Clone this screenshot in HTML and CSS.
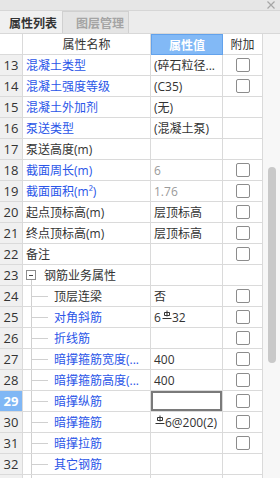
FILE: index.html
```html
<!DOCTYPE html>
<html lang="zh-CN">
<head>
<meta charset="utf-8">
<title>属性列表</title>
<link rel="stylesheet" href="styles.css">
</head>
<body>
<div class="panel">
  <div class="titlebar"><svg class="close" width="8" height="8" viewBox="0 0 8 8"><path d="M0.5 0.5L7.5 7.5M7.5 0.5L0.5 7.5" stroke="#a6a6a6" stroke-width="1.2" fill="none"/></svg></div>
  <div class="tabs">
    <div class="tab active">属性列表</div>
    <div class="tab">图层管理</div>
  </div>
  <div class="body">
    <div class="grid">
      <div class="row head">
        <div class="c num"></div>
        <div class="c name center">属性名称</div>
        <div class="c val hl">属性值</div>
        <div class="c add center">附加</div>
      </div>
      <div class="row"><div class="c num">13</div><div class="c name blue">混凝土类型</div><div class="c val">(碎石粒径...</div><div class="c add"><span class="cb"></span></div></div>
      <div class="row"><div class="c num">14</div><div class="c name blue">混凝土强度等级</div><div class="c val">(C35)</div><div class="c add"><span class="cb"></span></div></div>
      <div class="row"><div class="c num">15</div><div class="c name blue">混凝土外加剂</div><div class="c val">(无)</div><div class="c add"></div></div>
      <div class="row"><div class="c num">16</div><div class="c name blue">泵送类型</div><div class="c val">(混凝土泵)</div><div class="c add"></div></div>
      <div class="row"><div class="c num">17</div><div class="c name">泵送高度(m)</div><div class="c val"></div><div class="c add"></div></div>
      <div class="row"><div class="c num">18</div><div class="c name blue">截面周长(m)</div><div class="c val grey">6</div><div class="c add"><span class="cb"></span></div></div>
      <div class="row"><div class="c num">19</div><div class="c name blue">截面面积(m²)</div><div class="c val grey">1.76</div><div class="c add"><span class="cb"></span></div></div>
      <div class="row"><div class="c num">20</div><div class="c name">起点顶标高(m)</div><div class="c val">层顶标高</div><div class="c add"><span class="cb"></span></div></div>
      <div class="row"><div class="c num">21</div><div class="c name">终点顶标高(m)</div><div class="c val">层顶标高</div><div class="c add"><span class="cb"></span></div></div>
      <div class="row"><div class="c num">22</div><div class="c name">备注</div><div class="c val"></div><div class="c add"><span class="cb"></span></div></div>
      <div class="row"><div class="c num">23</div><div class="c name group"><span class="toggle"></span>钢筋业务属性</div><div class="c val"></div><div class="c add"></div></div>
      <div class="row"><div class="c num">24</div><div class="c name child">顶层连梁</div><div class="c val">否</div><div class="c add"><span class="cb"></span></div></div>
      <div class="row"><div class="c num">25</div><div class="c name child blue">对角斜筋</div><div class="c val">6<svg class="rb" width="10" height="9" viewBox="0 0 10 9"><path d="M5 0.5V6.5M2.5 2.5H7.5V5.5H2.5ZM0.5 8.5H9.5" fill="none" stroke="#333" stroke-width="1"/></svg>32</div><div class="c add"><span class="cb"></span></div></div>
      <div class="row"><div class="c num">26</div><div class="c name child blue">折线筋</div><div class="c val"></div><div class="c add"><span class="cb"></span></div></div>
      <div class="row"><div class="c num">27</div><div class="c name child blue">暗撑箍筋宽度(...</div><div class="c val">400</div><div class="c add"><span class="cb"></span></div></div>
      <div class="row"><div class="c num">28</div><div class="c name child blue">暗撑箍筋高度(...</div><div class="c val">400</div><div class="c add"><span class="cb"></span></div></div>
      <div class="row"><div class="c num sel">29</div><div class="c name child blue">暗撑纵筋</div><div class="c val edit"></div><div class="c add"><span class="cb"></span></div></div>
      <div class="row"><div class="c num">30</div><div class="c name child blue">暗撑箍筋</div><div class="c val"><svg class="rb" width="10" height="9" viewBox="0 0 10 9"><path d="M5 0.5V6.5M2.5 2.5H7.5V5.5H2.5ZM0.5 8.5H9.5" fill="none" stroke="#333" stroke-width="1"/></svg>6@200(2)</div><div class="c add"><span class="cb"></span></div></div>
      <div class="row"><div class="c num">31</div><div class="c name child blue">暗撑拉筋</div><div class="c val"></div><div class="c add"><span class="cb"></span></div></div>
      <div class="row"><div class="c num">32</div><div class="c name child blue">其它钢筋</div><div class="c val"></div><div class="c add"></div></div>
      <div class="row"><div class="c num"></div><div class="c name child"></div><div class="c val"></div><div class="c add"></div></div>
    </div>
    <div class="scroll"><div class="thumb"></div></div>
  </div>
</div>
</body>
</html>
```

FILE: styles.css
```css
* { box-sizing: border-box; }
html, body { margin: 0; padding: 0; }
body {
  width: 280px;
  height: 478px;
  overflow: hidden;
  background: #ffffff;
  font-family: "Open Sans", "Noto Sans CJK SC", sans-serif;
  font-size: 12px;
  color: #333333;
}
.panel {
  display: flex;
  flex-direction: column;
  height: 478px;
}
.titlebar {
  height: 11px;
  background: #e6e6e6;
  border-bottom: 1px solid #d6d6d6;
  display: flex;
  justify-content: flex-end;
  align-items: center;
  padding-right: 5px;
}
.close { display: block; }
.tabs {
  height: 23px;
  display: flex;
  align-items: stretch;
  background: #ececec;
  border-bottom: 1px solid #d8d8d8;
}
.tab {
  display: flex;
  align-items: center;
  font-family: "Noto Sans CJK SC", sans-serif;
  font-size: 12px;
  font-weight: bold;
  color: #a4a4a4;
  padding: 0 4px 0 13px;
  background: #e4e4e4;
  border: 1px solid #d0d0d0;
  border-bottom: none;
}
.tab.active {
  color: #333333;
  background: #f0f0f0;
  border: none;
  padding: 0 5px 0 9px;
  width: 62px;
}
.body {
  flex: 1;
  display: flex;
  overflow: hidden;
}
.grid {
  width: 263px;
  display: flex;
  flex-direction: column;
}
.row {
  display: grid;
  grid-template-columns: 23px 128px 72px 40px;
  height: 21px;
  flex: none;
}
.c {
  border-right: 1px solid #dadada;
  border-bottom: 1px solid #dadada;
  display: flex;
  align-items: center;
  white-space: nowrap;
  overflow: hidden;
  font-family: "Open Sans", "Noto Sans CJK SC", sans-serif;
  font-size: 12px;
}
.num {
  justify-content: center;
  background: #f0f0f0;
  font-size: 13px;
  color: #333333;
}
.head .num { background: #ffffff; }
.num.sel {
  background: #80b7f5;
  color: #ffffff;
  font-weight: bold;
}
.name { padding-left: 3px; }
.center { justify-content: center; padding-left: 0; }
.val { padding-left: 3px; }
.add { justify-content: center; }
.hl {
  background: #82b9f6;
  border: 1px solid #62a2ec;
  color: #ffffff;
  font-weight: bold;
  justify-content: center;
  padding-left: 0;
}
.blue { color: #2a55e8; }
.grey { color: #9a9a9a; }
.edit { box-shadow: inset 0 0 0 2px #7a7a7a; }
.cb {
  width: 14px;
  height: 14px;
  border: 1px solid #8c8c8c;
  border-radius: 2px;
  background: #ffffff;
}
.group {
  padding-left: 3px;
  gap: 8px;
  background: linear-gradient(#cfcfcf, #cfcfcf) no-repeat 8px 100% / 1px 5px;
}
.toggle {
  width: 10px;
  height: 10px;
  border: 1px solid #8c8c8c;
  background: #ffffff linear-gradient(#444, #444) no-repeat center / 4px 1px;
  flex: none;
}
.child {
  padding-left: 31px;
  background:
    linear-gradient(#d0d0d0, #d0d0d0) no-repeat 8px 0 / 1px 100%,
    linear-gradient(#d0d0d0, #d0d0d0) no-repeat 8px 50% / 17px 1px;
}
.rb {
  margin: 0 0 5px 1px;
  flex: none;
}
.scroll {
  width: 17px;
  background: #f7f7f7;
  padding: 133px 4px 0 5px;
}
.thumb {
  height: 196px;
  border-radius: 4px;
  background: #c9c9c9;
}
```
